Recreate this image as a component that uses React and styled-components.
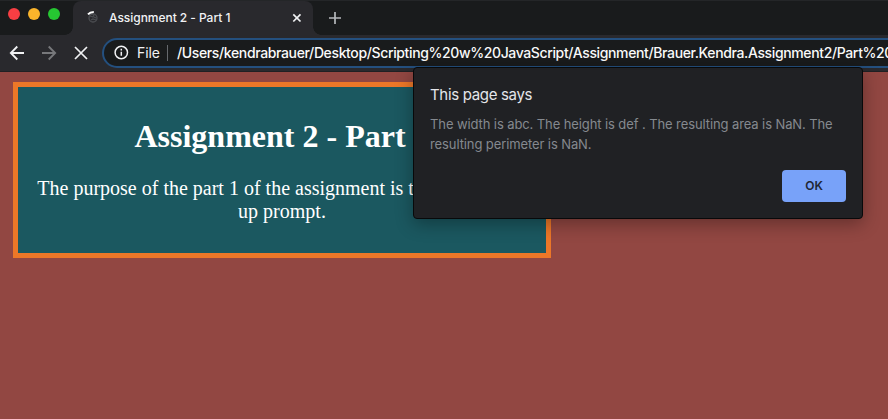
import React from "react";
import styled, { createGlobalStyle } from "styled-components";

const GlobalStyle = createGlobalStyle`
  * { box-sizing: border-box; }
  body { margin: 0; overflow: hidden; background: #924742; }
`;

const Browser = styled.div`
  position: relative;
  width: 888px;
  height: 419px;
  display: flex;
  flex-direction: column;
  overflow: hidden;
  background: #924742;
  font-family: Inter, "Liberation Sans", sans-serif;
`;

const TabStrip = styled.header`
  display: flex;
  height: 35px;
  flex: none;
  background: #191b1c;
  border-top: 1px solid #242628;
`;

const WindowControls = styled.div`
  display: flex;
  gap: 8px;
  width: 73px;
  padding: 7px 0 0 8px;
  flex: none;
`;

const Light = styled.span`
  width: 12px;
  height: 12px;
  border-radius: 50%;
  background: ${(p) => p.$color};
`;

const Tab = styled.div`
  position: relative;
  display: flex;
  align-items: center;
  width: 240px;
  height: 34px;
  padding: 0 11px 0 13px;
  background: #29292d;
  border-radius: 8px 8px 0 0;
  &::before,
  &::after {
    content: "";
    position: absolute;
    bottom: 0;
    width: 8px;
    height: 8px;
  }
  &::before {
    left: -8px;
    background: radial-gradient(circle at 0 0, transparent 7.5px, #29292d 8px);
  }
  &::after {
    right: -8px;
    background: radial-gradient(circle at 100% 0, transparent 7.5px, #29292d 8px);
  }
`;

const TabTitle = styled.span`
  flex: 1;
  margin-left: 7px;
  color: #f1f2f4;
  font-size: 12px;
  font-weight: 500;
  line-height: 16px;
  letter-spacing: -0.04px;
  white-space: nowrap;
`;

const Icon = styled.svg`
  display: block;
  flex: none;
  fill: none;
  stroke: ${(p) => p.$color || "#f1f2f4"};
  stroke-width: ${(p) => p.$weight || 1.8};
`;

const NewTab = styled.div`
  display: flex;
  padding: 10px 0 0 15px;
`;

const Toolbar = styled.nav`
  display: flex;
  align-items: center;
  height: 37px;
  flex: none;
  padding: 0 0 1px 9px;
  background: #29292d;
  border-bottom: 1px solid #202023;
`;

const NavButtons = styled.div`
  display: flex;
  gap: 16px;
  width: 93px;
  flex: none;
`;

const AddressBar = styled.div`
  display: flex;
  align-items: center;
  width: 820px;
  height: 30px;
  flex: none;
  padding-left: 10px;
  background: #191b1c;
  border: 2px solid #24507f;
  border-radius: 15px;
  color: #f1f2f4;
  font-size: 14px;
  line-height: 18px;
  white-space: nowrap;
`;

const Scheme = styled.span`
  width: 30px;
  margin-left: 8px;
  font-size: 14px;
  letter-spacing: -0.1px;
`;

const Divider = styled.span`
  width: 1px;
  height: 16px;
  margin-right: 9px;
  background: #66696d;
`;

const Url = styled.span`
  font-weight: 500;
  font-size: 14px;
  color: #fafafa;
  letter-spacing: -0.37px;
`;

const Page = styled.main`
  flex: 1;
  padding: 10px 0 0 13px;
  font-family: "Liberation Serif", "Times New Roman", serif;
`;

const Card = styled.section`
  width: 538px;
  height: 176px;
  padding: 10px;
  border: 5px solid #ec7728;
  background: #1b5860;
  color: #fff;
  text-align: center;
`;

const Heading = styled.h1`
  margin: 21px 0 22px;
  font-size: 32px;
  line-height: 37px;
`;

const Description = styled.p`
  margin: 0;
  font-size: 20px;
  line-height: 23px;
`;

const Dialog = styled.div`
  position: absolute;
  left: 413px;
  top: 67px;
  width: 450px;
  height: 152px;
  display: flex;
  flex-direction: column;
  padding: 17px 16px 16px 16px;
  background: #202124;
  border: 1px solid #08090a;
  border-radius: 4px;
  box-shadow: 0 5px 18px rgba(0, 0, 0, 0.32);
`;

const DialogTitle = styled.h2`
  margin: 0;
  color: #e4e6ea;
  font-size: 15px;
  font-weight: 400;
  line-height: 20px;
  letter-spacing: -0.33px;
`;

const DialogText = styled.p`
  margin: 9px 0 0;
  color: #85898f;
  font-size: 13px;
  font-weight: 400;
  line-height: 20px;
  letter-spacing: -0.1px;
  white-space: nowrap;
`;

const OkButton = styled.button`
  align-self: flex-end;
  width: 64px;
  height: 32px;
  margin-top: auto;
  padding: 0 0 1px;
  border: 0;
  border-radius: 4px;
  background: #78a2f9;
  color: #202735;
  font-family: inherit;
  font-size: 12px;
  font-weight: 600;
`;

export default function App() {
  return (
    <Browser>
      <GlobalStyle />
      <TabStrip>
        <WindowControls>
          <Light $color="#f73e43" />
          <Light $color="#fab42b" />
          <Light $color="#26c732" />
        </WindowControls>
        <Tab>
          <Icon width="16" height="16" viewBox="0 0 16 16" $color="#4c4e52" $weight={1.3}>
            <circle cx="7" cy="8" r="4" />
            <path d="M4 6l3 1 1-2M5 10l2-1 3 1M8 7l2 1" />
            <path d="M2 4.3Q4 2 7.8 2" stroke="#fff" strokeWidth="2" />
          </Icon>
          <TabTitle>Assignment 2 - Part 1</TabTitle>
          <Icon width="10" height="10" viewBox="0 0 10 10" $weight={1.7}>
            <path d="M1.3 1.3l7.2 7.2M8.5 1.3L1.3 8.5" />
          </Icon>
        </Tab>
        <NewTab>
          <Icon width="14" height="14" viewBox="0 0 14 14" $color="#b5b8bb" $weight={1.7}>
            <path d="M7 1v12M1 7h12" />
          </Icon>
        </NewTab>
      </TabStrip>
      <Toolbar>
        <NavButtons>
          <Icon width="16" height="16" viewBox="0 0 16 16">
            <path d="M15 8H2M8.3 1.5L1.8 8l6.5 6.5" />
          </Icon>
          <Icon width="16" height="16" viewBox="0 0 16 16" $color="#77787b">
            <path d="M1 8h13M7.7 1.5L14.2 8l-6.5 6.5" />
          </Icon>
          <Icon width="16" height="16" viewBox="0 0 16 16" $weight={1.7}>
            <path d="M2 2l12 12M14 2L2 14" />
          </Icon>
        </NavButtons>
        <AddressBar>
          <Icon width="15" height="15" viewBox="0 0 15 15" $weight={1.5}>
            <circle cx="7.3" cy="7.5" r="6.2" />
            <path d="M7.3 6.7v4M7.3 3.8v1.6" />
          </Icon>
          <Scheme>File</Scheme>
          <Divider />
          <Url>/Users/kendrabrauer/Desktop/Scripting%20w%20JavaScript/Assignment/Brauer.Kendra.Assignment2/Part%20</Url>
        </AddressBar>
      </Toolbar>
      <Page>
        <Card>
          <Heading>Assignment 2 - Part 1</Heading>
          <Description>
            The purpose of the part 1 of the assignment is to show a pop-
            <br />
            up prompt.
          </Description>
        </Card>
      </Page>
      <Dialog role="alertdialog">
        <DialogTitle>This page says</DialogTitle>
        <DialogText>
          The width is abc. The height is def . The resulting area is NaN. The
          <br />
          resulting perimeter is NaN.
        </DialogText>
        <OkButton>OK</OkButton>
      </Dialog>
    </Browser>
  );
}
